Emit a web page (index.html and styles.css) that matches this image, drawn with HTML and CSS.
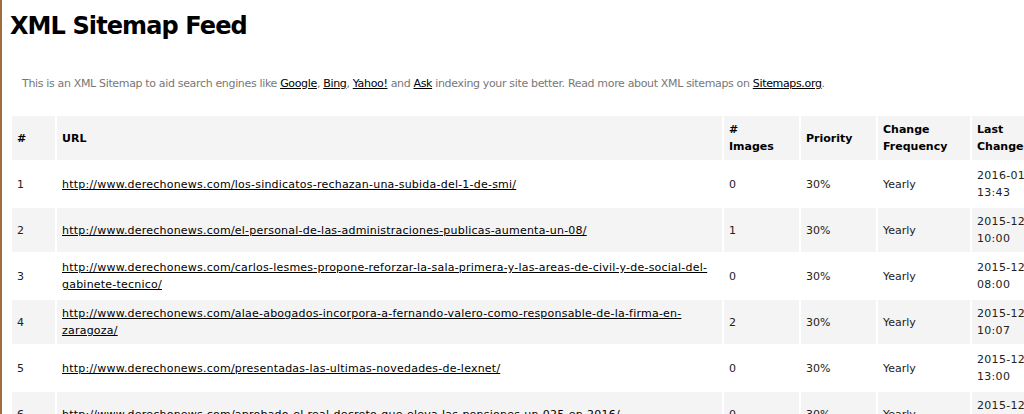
FILE: index.html
```html
<!DOCTYPE html>
<html>
<head>
<meta charset="utf-8">
<title>XML Sitemap Feed</title>
<link rel="stylesheet" href="styles.css">
</head>
<body>
<h1 class="title">XML Sitemap Feed</h1>
<p class="intro">This is an XML Sitemap to aid search engines like <a href="#">Google</a>, <a href="#">Bing</a>, <a href="#">Yahoo!</a> and <a href="#">Ask</a> indexing your site better. Read more about XML sitemaps on <a href="#">Sitemaps.org</a>.</p>
<table class="sitemap">
  <colgroup>
    <col class="c-num"><col class="c-url"><col class="c-img"><col class="c-pri"><col class="c-freq"><col class="c-date">
  </colgroup>
  <thead>
    <tr><th>#</th><th>URL</th><th># Images</th><th>Priority</th><th>Change Frequency</th><th>Last Changed</th></tr>
  </thead>
  <tbody>
    <tr><td>1</td><td><a href="#">http://www.derechonews.com/los-sindicatos-rechazan-una-subida-del-1-de-smi/</a></td><td>0</td><td>30%</td><td>Yearly</td><td class="date">2016-01-19 13:43</td></tr>
    <tr><td>2</td><td><a href="#">http://www.derechonews.com/el-personal-de-las-administraciones-publicas-aumenta-un-08/</a></td><td>1</td><td>30%</td><td>Yearly</td><td class="date">2015-12-30 10:00</td></tr>
    <tr><td>3</td><td><a href="#">http://www.derechonews.com/carlos-lesmes-propone-reforzar-la-sala-primera-y-las-areas-de-civil-y-de-social-del-gabinete-tecnico/</a></td><td>0</td><td>30%</td><td>Yearly</td><td class="date">2015-12-30 08:00</td></tr>
    <tr><td>4</td><td><a href="#">http://www.derechonews.com/alae-abogados-incorpora-a-fernando-valero-como-responsable-de-la-firma-en-zaragoza/</a></td><td>2</td><td>30%</td><td>Yearly</td><td class="date">2015-12-29 10:07</td></tr>
    <tr><td>5</td><td><a href="#">http://www.derechonews.com/presentadas-las-ultimas-novedades-de-lexnet/</a></td><td>0</td><td>30%</td><td>Yearly</td><td class="date">2015-12-28 13:00</td></tr>
    <tr><td>6</td><td><a href="#">http://www.derechonews.com/aprobado-el-real-decreto-que-eleva-las-pensiones-un-025-en-2016/</a></td><td>0</td><td>30%</td><td>Yearly</td><td class="date">2015-12-28 09:00</td></tr>
  </tbody>
</table>
</body>
</html>
```

FILE: styles.css
```css
html {
  margin: 0;
  overflow: hidden;
  background: #fff;
}
body {
  margin: 0;
  padding: 0 8px;
  min-height: 414px;
  border-left: 2px solid #9c6d3d;
  font-family: "DejaVu Sans", Verdana, sans-serif;
  font-size: 11px;
  color: #222;
}
.title {
  margin: 11px 0 0;
  font-size: 24px;
  line-height: 30px;
  letter-spacing: -0.9px;
  font-weight: bold;
  color: #000;
}
.intro {
  margin: 34px 0 0;
  padding-left: 12px;
  line-height: 17px;
  letter-spacing: -0.34px;
  color: #777;
  white-space: nowrap;
}
.intro a {
  color: #000;
  text-decoration: underline;
}
.sitemap {
  margin-top: 22px;
  border-collapse: separate;
  border-spacing: 2px;
  table-layout: fixed;
  width: 1084px;
}
.c-num { width: 43px; }
.c-url { width: 665px; }
.c-img { width: 75px; }
.c-pri { width: 75px; }
.c-freq { width: 92px; }
.c-date { width: 120px; }
.sitemap th,
.sitemap td {
  padding: 5px;
  line-height: 17px;
  height: 34px;
  text-align: left;
  vertical-align: middle;
}
.sitemap th {
  background: #f4f4f4;
  font-weight: bold;
  color: #000;
  word-spacing: 200px;
}
.sitemap .date {
  word-spacing: 200px;
  letter-spacing: 0.3px;
}
.sitemap tbody tr:nth-child(even) td {
  background: #f4f4f4;
}
.sitemap a {
  color: #000;
  text-decoration: underline;
  letter-spacing: 0.22px;
}
```
